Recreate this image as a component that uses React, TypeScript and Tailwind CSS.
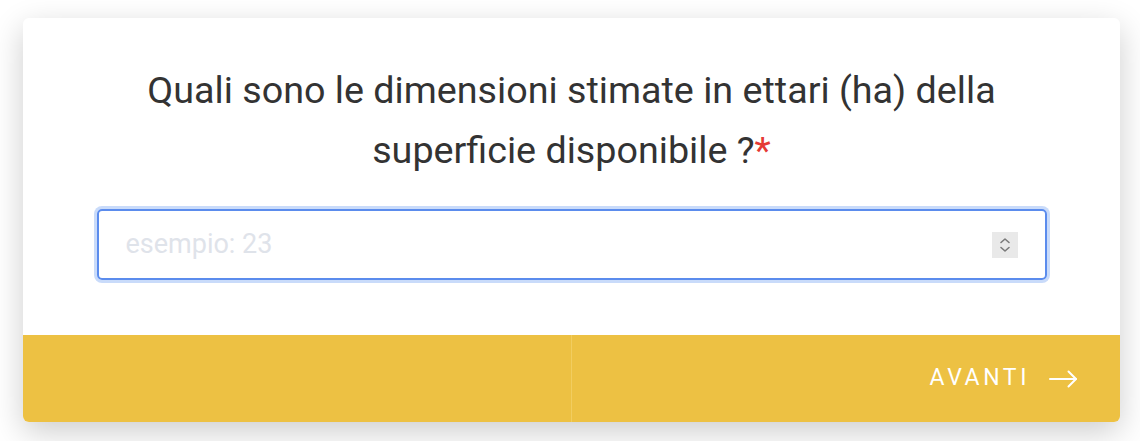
import React from "react";

export default function App() {
  return (
    <div className="w-[1140px] h-[441px] bg-white pt-[18px] pl-[23px]" style={{ fontFamily: "Roboto, 'Noto Sans', sans-serif" }}>
      <div className="w-[1097px] h-[404px] bg-white rounded-[6px] shadow-[0_10px_32px_rgba(0,0,0,0.2)] flex flex-col overflow-hidden">
        <div className="h-[317px] flex flex-col items-center pt-[42px]">
          <h1 className="text-[37.7px] leading-[60px] text-[#333333] text-center w-[920px] font-normal">
            Quali sono le dimensioni stimate in ettari (ha) della superficie disponibile ?<span className="text-[#e53935]">*</span>
          </h1>
          <div className="mt-[29px] w-[950px] h-[71px] rounded-[5px] border-2 border-[#5b8ced] ring-[3px] ring-[#c9dbfa] flex items-center pl-[27px] pr-[27px]">
            <span className="text-[27px] text-[#dfe3ea] flex-1">esempio: 23</span>
            <div className="w-[26px] h-[26px] bg-[#e9e9e9] flex items-center justify-center">
              <svg width="14" height="20" viewBox="0 0 14 20" fill="none" stroke="#7a7a7a" strokeWidth="1.6" strokeLinecap="round" strokeLinejoin="round">
                <path d="M3 7.5 L7 4 L11 7.5" />
                <path d="M3 12.5 L7 16 L11 12.5" />
              </svg>
            </div>
          </div>
        </div>
        <div className="h-[87px] bg-[#edc143] flex">
          <div className="w-[549px] border-r border-[#f2cd5f]" />
          <div className="flex-1 flex items-center justify-end pr-[42px]">
            <span className="text-white text-[23px] tracking-[3.6px]">AVANTI</span>
            <svg className="ml-[18px]" width="30" height="20" viewBox="0 0 30 20" fill="none" stroke="white" strokeWidth="2" strokeLinecap="round" strokeLinejoin="round">
              <path d="M2 10 H28" />
              <path d="M20.5 2.5 L28 10 L20.5 17.5" />
            </svg>
          </div>
        </div>
      </div>
    </div>
  );
}
